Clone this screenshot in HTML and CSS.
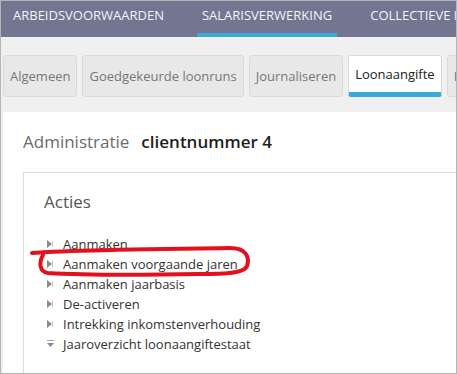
FILE: index.html
```html
<!DOCTYPE html>
<html lang="en">
<head>
    <meta name="viewport" content="width=device-width, initial-scale=1.0">
    <title>Loonaangifte</title>
    <link rel="stylesheet" href="styles.css">
</head>
<body>
    <div class="frame">
        <!-- Hoofdmenu -->
        <div class="topnav">
            <span class="topnav-item">Arbeidsvoorwaarden</span>
            <span class="topnav-item active">Salarisverwerking</span>
            <span class="topnav-item">Collectieve mutaties</span>
        </div>

        <!-- Submenu tabs -->
        <div class="tabs">
            <span class="tab">Algemeen</span>
            <span class="tab">Goedgekeurde loonruns</span>
            <span class="tab">Journaliseren</span>
            <span class="tab active">Loonaangifte</span>
            <span class="tab">Rapportages</span>
        </div>

        <div class="panel">
            <div class="panel-title">
                <span class="label">Administratie</span>
                <span class="value">clientnummer 4</span>
            </div>

            <div class="box">
                <div class="box-title">Acties</div>
                <ul class="actions">
                    <li><svg class="arrow" width="7" height="8" viewBox="0 0 7 8"><polygon points="0,0 5,4 0,8" fill="#8a8a8a"/><rect x="5" y="1" width="1" height="6" fill="#c4c4c4"/></svg>Aanmaken</li>
                    <li><svg class="arrow" width="7" height="8" viewBox="0 0 7 8"><polygon points="0,0 5,4 0,8" fill="#8a8a8a"/><rect x="5" y="1" width="1" height="6" fill="#c4c4c4"/></svg>Aanmaken voorgaande jaren</li>
                    <li><svg class="arrow" width="7" height="8" viewBox="0 0 7 8"><polygon points="0,0 5,4 0,8" fill="#8a8a8a"/><rect x="5" y="1" width="1" height="6" fill="#c4c4c4"/></svg>Aanmaken jaarbasis</li>
                    <li><svg class="arrow" width="7" height="8" viewBox="0 0 7 8"><polygon points="0,0 5,4 0,8" fill="#8a8a8a"/><rect x="5" y="1" width="1" height="6" fill="#c4c4c4"/></svg>De-activeren</li>
                    <li><svg class="arrow" width="7" height="8" viewBox="0 0 7 8"><polygon points="0,0 5,4 0,8" fill="#8a8a8a"/><rect x="5" y="1" width="1" height="6" fill="#c4c4c4"/></svg>Intrekking inkomstenverhouding</li>
                    <li><svg class="arrow" width="7" height="8" viewBox="0 0 7 8"><rect x="0" y="0" width="7" height="1" fill="#a0a0a0"/><polygon points="0,3 7,3 3.5,7" fill="#8a8a8a"/></svg>Jaaroverzicht loonaangiftestaat</li>
                </ul>
            </div>
        </div>

        <!-- rode markering over de tweede actie -->
        <svg class="markup" width="457" height="374" viewBox="0 0 457 374">
            <path d="M32,253 C60,250 150,249 230,248 C246,248 250,257 247,266 C244,274 220,274 200,274 C150,275 80,275 48,273 C39,272 39,262 43,255" fill="none" stroke="#e3101e" stroke-width="4" stroke-linecap="round"/>
        </svg>
    </div>
</body>
</html>
```

FILE: styles.css
```css
body {
    margin: 0;
    font-family: "Open Sans", Arial, sans-serif;
}
.frame {
    position: relative;
    width: 457px;
    height: 374px;
    box-sizing: border-box;
    border: 1px solid #b5b5b5;
    background-color: #f0f0f0;
    overflow: hidden;
}
.topnav {
    display: flex;
    gap: 28px;
    height: 36px;
    padding-left: 7px;
    background-color: #727690;
    white-space: nowrap;
}
.topnav-item {
    padding: 0 5px;
    line-height: 29px;
    height: 32px;
    border-bottom: 4px solid transparent;
    color: #f4f4f8;
    font-size: 13px;
    text-transform: uppercase;
}
.topnav-item.active {
    border-bottom-color: #3aabd8;
}
.tabs {
    display: flex;
    gap: 5px;
    padding: 18px 0 15px 2px;
    white-space: nowrap;
}
.tab {
    flex-shrink: 0;
    box-sizing: border-box;
    height: 42px;
    padding: 0 6px;
    line-height: 40px;
    font-size: 13px;
    color: #777;
    background-color: #e8e8e8;
    border: 1px solid #dadada;
    border-radius: 3px;
}
.tab.active {
    background-color: #fff;
    color: #222;
    line-height: 36px;
    border-bottom: 5px solid #3aabd8;
}
.panel {
    margin-left: 2px;
    height: 300px;
    padding: 18px 0 0 20px;
    background-color: #fff;
}
.panel-title {
    display: flex;
    gap: 12px;
    font-size: 17px;
    line-height: 24px;
}
.panel-title .label {
    color: #6b6b6b;
}
.panel-title .value {
    color: #1e1e1e;
    font-weight: 600;
}
.box {
    margin-top: 18px;
    height: 240px;
    padding: 16px 0 0 20px;
    border: 1px solid #dcdcdc;
    border-right: none;
}
.box-title {
    font-size: 17px;
    line-height: 26px;
    color: #555;
}
.actions {
    list-style: none;
    margin: 19px 0 0 0;
    padding: 0 0 0 3px;
}
.actions li {
    display: flex;
    align-items: center;
    height: 20px;
    font-size: 13px;
    color: #333;
}
.arrow {
    margin-right: 9px;
}
.markup {
    position: absolute;
    left: -1px;
    top: -1px;
    pointer-events: none;
}
```
